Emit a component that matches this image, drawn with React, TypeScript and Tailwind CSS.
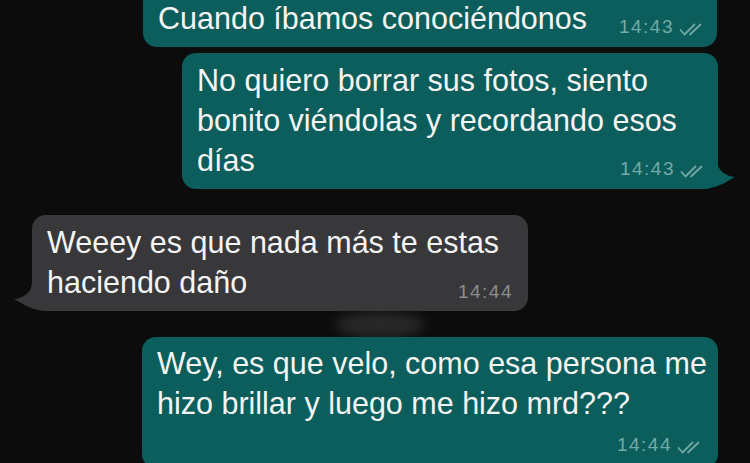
import React from 'react';

const TEAL = 'bg-[#0b5e5b]';

const Ticks = () => (
    <svg width="26" height="13" viewBox="0 0 26 13" fill="none" className="text-[#72a8a4]">
        <path d="M1.5 7 L5.5 11.5 L15.5 1.5" stroke="currentColor" strokeWidth="1.8" strokeLinecap="round" strokeLinejoin="round" />
        <path d="M11 11.5 L21.5 1.5" stroke="currentColor" strokeWidth="1.8" strokeLinecap="round" strokeLinejoin="round" />
    </svg>
);

const Stamp: React.FC<{ time: string; read?: boolean; dim?: boolean }> = ({ time, read, dim }) => (
    <div className="flex items-end gap-[5px]">
        <span className={`text-[19px] leading-none tracking-[1.5px] ${dim ? 'text-[#8c8c8e]' : 'text-[#74aaa6]'}`}>{time}</span>
        {read && <Ticks />}
    </div>
);

const TailRight = () => (
    <svg width="30" height="28" viewBox="0 0 30 28" className="absolute right-[-17px] bottom-0 text-[#0b5e5b]">
        <path d="M12 0 C13 9, 19 15, 30 16 C24 19, 16 26, 0 28 L0 0 Z" fill="currentColor" />
    </svg>
);

const TailLeft = () => (
    <svg width="30" height="28" viewBox="0 0 30 28" className="absolute left-[-18px] bottom-0 text-[#38383a]">
        <path d="M18 0 C17 9, 11 15, 0 16 C6 19, 14 26, 30 28 L30 0 Z" fill="currentColor" />
    </svg>
);

const App: React.FC = () => {
    return (
        <div
            className="relative h-[463px] w-[750px] overflow-hidden bg-[#0c0c0c] text-white"
            style={{ fontFamily: '"Liberation Sans", Arial, sans-serif' }}
        >
            {/* wallpaper smudge */}
            <div className="absolute left-[335px] top-[312px] h-[26px] w-[90px] rounded-[50%] bg-[#6a6a6a]/30 blur-[6px]" />

            <div className="relative flex flex-col whitespace-nowrap text-[30.5px] leading-[40px] text-[#f4f4f4]">
                {/* 1 */}
                <div className="mt-[-9px] flex justify-end pr-[33px]">
                    <div className={`relative w-[574px] rounded-b-[14px] ${TEAL} px-[15px] pt-[7px] pb-[9px]`}>
                        <div>Cuando íbamos conociéndonos</div>
                        <div className="absolute right-[12px] bottom-[11px]">
                            <Stamp time="14:43" read />
                        </div>
                    </div>
                </div>

                {/* 2 */}
                <div className="mt-[6px] flex justify-end pr-[32px]">
                    <div className={`relative w-[536px] rounded-[14px] ${TEAL} px-[15px] pt-[7px] pb-[9px]`}>
                        <TailRight />
                        <div className="relative">No quiero borrar sus fotos, siento</div>
                        <div className="relative">bonito viéndolas y recordando esos</div>
                        <div className="relative">días</div>
                        <div className="absolute right-[12px] bottom-[11px]">
                            <Stamp time="14:43" read />
                        </div>
                    </div>
                </div>

                {/* 3 */}
                <div className="mt-[26px] flex justify-start pl-[32px]">
                    <div className="relative w-[496px] rounded-[14px] bg-[#38383a] px-[15px] pt-[7px] pb-[9px]">
                        <TailLeft />
                        <div className="relative">Weeey es que nada más te estas</div>
                        <div className="relative">haciendo daño</div>
                        <div className="absolute right-[15px] bottom-[10px]">
                            <Stamp time="14:44" dim />
                        </div>
                    </div>
                </div>

                {/* 4 */}
                <div className="mt-[26px] flex justify-end pr-[32px]">
                    <div className={`relative w-[576px] rounded-[14px] ${TEAL} px-[15px] pt-[6px] pb-[14px]`}>
                        <div>Wey, es que velo, como esa persona me</div>
                        <div>hizo brillar y luego me hizo mrd???</div>
                        <div className="mt-[12px] flex justify-end">
                            <Stamp time="14:44" read />
                        </div>
                    </div>
                </div>
            </div>
        </div>
    );
};

export default App;
